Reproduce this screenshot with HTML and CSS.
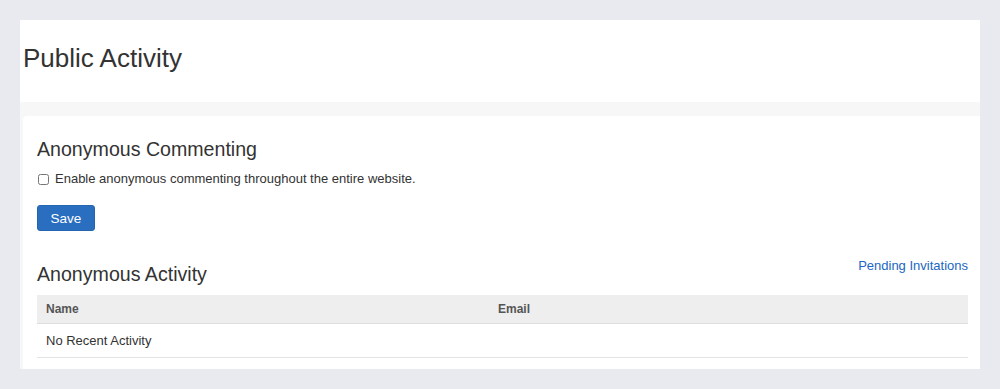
FILE: index.html
```html
<!DOCTYPE html>
<html lang="en">
<head>
    <meta charset="UTF-8">
    <meta name="viewport" content="width=device-width, initial-scale=1.0">
    <title>Public Activity</title>
    <link rel="stylesheet" href="styles.css">
</head>
<body>
    <div class="panel">
        <div class="page-head">
            <h1 class="page-title">Public Activity</h1>
        </div>
        <div class="band">
            <div class="card">
                <h2 class="section-title">Anonymous Commenting</h2>
                <label class="check-row">
                    <input type="checkbox" class="check">
                    <span>Enable anonymous commenting throughout the entire website.</span>
                </label>
                <button class="save-btn">Save</button>

                <div class="activity-head">
                    <h2 class="section-title">Anonymous Activity</h2>
                    <a href="#" class="pending-link">Pending Invitations</a>
                </div>
                <table class="activity-table">
                    <thead>
                        <tr>
                            <th class="col-name">Name</th>
                            <th>Email</th>
                        </tr>
                    </thead>
                    <tbody>
                        <tr>
                            <td colspan="2">No Recent Activity</td>
                        </tr>
                    </tbody>
                </table>
            </div>
        </div>
    </div>
</body>
</html>
```

FILE: styles.css
```css
*{
    margin: 0;
    padding: 0;
    box-sizing: border-box;
}
body{
    background-color: #e9eaf0;
    font-family: "Liberation Sans", Arial, sans-serif;
    color: #333;
    padding: 20px 20px 0 20px;
}
.panel{
    background-color: #fff;
    width: 960px;
}
.page-head{
    height: 82px;
    padding: 22px 0 0 3px;
}
.page-title{
    font-size: 26px;
    font-weight: normal;
    line-height: 32px;
    color: #333;
}
.band{
    background-color: #f7f7f7;
    padding: 14px 0 0 3px;
}
.card{
    background-color: #fff;
    border-top-left-radius: 4px;
    padding: 21px 12px 11px 14px;
    height: 253px;
}
.section-title{
    font-size: 19.6px;
    font-weight: normal;
    line-height: 24px;
    color: #333;
}
.check-row{
    display: flex;
    align-items: center;
    margin-top: 9px;
    font-size: 13px;
    line-height: 18px;
}
.check{
    width: 11px;
    height: 11px;
    margin: 0 6px 0 1px;
}
.save-btn{
    margin-top: 17px;
    width: 58px;
    height: 26px;
    background-color: #2a6ebf;
    color: #fff;
    border: 1px solid #2465b0;
    border-radius: 3px;
    font-family: inherit;
    font-size: 13.5px;
}
.activity-head{
    display: flex;
    justify-content: space-between;
    align-items: flex-start;
    margin-top: 26px;
}
.activity-head .section-title{
    margin-top: 5px;
}
.pending-link{
    color: #2166c2;
    text-decoration: none;
    font-size: 13px;
    line-height: 18px;
}
.activity-table{
    width: 100%;
    border-collapse: collapse;
    margin-top: 9px;
    font-size: 13px;
}
.activity-table th{
    background-color: #eee;
    text-align: left;
    font-size: 12px;
    color: #555;
    height: 28px;
    padding: 0 9px;
    border-bottom: 1px solid #ddd;
}
.activity-table .col-name{
    width: 452px;
}
.activity-table td{
    height: 34px;
    padding: 0 9px;
    border-bottom: 1px solid #e3e3e3;
}
```
